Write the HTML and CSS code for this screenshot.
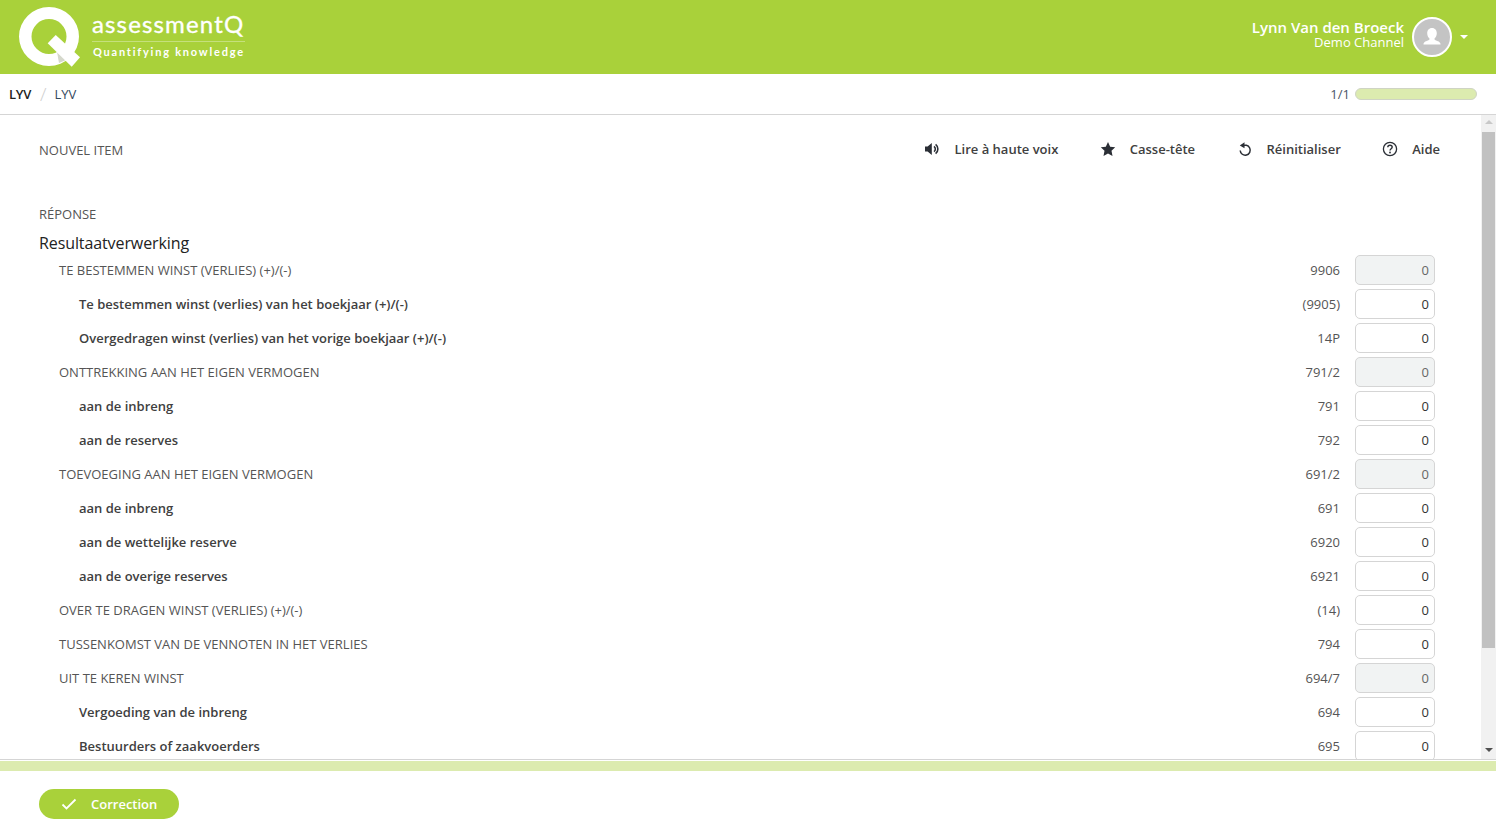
FILE: index.html
```html
<!DOCTYPE html>
<html lang="fr">
<head>
<meta charset="utf-8">
<title>assessmentQ</title>
<link rel="stylesheet" href="styles.css">
</head>
<body>
<div class="page">
  <header class="topbar">
    <div class="logo">
      <svg class="logo-q" viewBox="1 0 66 64" width="66" height="64" aria-hidden="true">
        <path fill-rule="evenodd" fill="#fff" d="M31 0a30 29.500 0 1 0 0 59a30 29.500 0 1 0 0-59zM31 12a17.500 17.500 0 1 1 0 35a17.500 17.500 0 1 1 0-35z"/>
        <path fill="#d5d8cc" d="M39 45L41 56L48 53z"/>
        <path fill="#fff" d="M37.700 28L29.700 36.300L53.700 59.700L62 50.300z"/>
      </svg>
      <div class="logo-text">
        <span class="logo-name">assessmentQ</span>
        <span class="logo-tag">Quantifying knowledge</span>
      </div>
    </div>
    <div class="user">
      <div class="user-text">
        <span class="user-name">Lynn Van den Broeck</span>
        <span class="user-channel">Demo Channel</span>
      </div>
      <div class="avatar">
        <svg viewBox="0 0 36 36" width="36" height="36" aria-hidden="true">
          <path fill="#fff" d="M18 9c-3.100 0-4.800 2.400-4.800 5.200 0 2.200.9 4 2.200 5.100v1.500c-1.300.9-5.400 1.500-5.900 4v.700h17v-.7c-.5-2.500-4.600-3.100-5.900-4v-1.500c1.300-1.100 2.200-2.900 2.200-5.100 0-2.800-1.700-5.200-4.800-5.200z"/>
        </svg>
      </div>
      <span class="caret"></span>
    </div>
  </header>

  <nav class="crumbs">
    <div class="crumb-list">
      <span class="crumb-first">LYV</span>
      <span class="crumb-sep">/</span>
      <span class="crumb-second">LYV</span>
    </div>
    <div class="progress-wrap">
      <span class="progress-label">1/1</span>
      <div class="progress"></div>
    </div>
  </nav>

  <div class="main">
    <div class="content">
      <div class="toolbar">
        <span class="item-title">NOUVEL ITEM</span>
        <div class="actions">
          <span class="action">
            <svg viewBox="1 0 16 16" width="16" height="16" aria-hidden="true"><path fill="#2b2f36" d="M1 5.500h2.600L7.800 2v12L3.600 10.500H1z"/><path fill="none" stroke="#2b2f36" stroke-width="1.600" d="M10 5.300a3.400 3.400 0 0 1 0 5.400M11.600 3.300a6 6 0 0 1 0 9.400"/></svg>
            Lire à haute voix
          </span>
          <span class="action">
            <svg viewBox="0 0 16 16" width="16" height="16" aria-hidden="true"><path fill="#2b2f36" d="M8 1l2.200 4.700 5 .6-3.700 3.500 1 5.100L8 12.400l-4.500 2.500 1-5.100L.8 6.300l5-.6z"/></svg>
            Casse-tête
          </span>
          <span class="action">
            <svg viewBox="0 0 16 16" width="16" height="16" aria-hidden="true"><path fill="none" stroke="#2b2f36" stroke-width="1.500" d="M5.200 5.200A5 5 0 1 1 3.200 9.500"/><path fill="#2b2f36" d="M7.500 1.200v6L2.800 4.600z"/></svg>
            Réinitialiser
          </span>
          <span class="action">
            <svg viewBox="0 0 16 16" width="16" height="16" aria-hidden="true"><circle cx="8" cy="8" r="6.600" fill="none" stroke="#2b2f36" stroke-width="1.300"/><path fill="none" stroke="#2b2f36" stroke-width="1.400" d="M5.800 6.300c0-1.300 1-2.100 2.200-2.100s2.200.8 2.200 1.900c0 1.700-2.200 1.700-2.200 3.500"/><circle cx="8" cy="11.500" r=".9" fill="#2b2f36"/></svg>
            Aide
          </span>
        </div>
      </div>
      <div class="answer-label">RÉPONSE</div>
      <h2 class="section-title">Resultaatverwerking</h2>
      <div class="rows">
        <div class="row head"><span class="label">TE BESTEMMEN WINST (VERLIES) (+)/(-)</span><span class="code">9906</span><span class="field readonly">0</span></div>
        <div class="row sub"><span class="label">Te bestemmen winst (verlies) van het boekjaar (+)/(-)</span><span class="code">(9905)</span><span class="field">0</span></div>
        <div class="row sub"><span class="label">Overgedragen winst (verlies) van het vorige boekjaar (+)/(-)</span><span class="code">14P</span><span class="field">0</span></div>
        <div class="row head"><span class="label">ONTTREKKING AAN HET EIGEN VERMOGEN</span><span class="code">791/2</span><span class="field readonly">0</span></div>
        <div class="row sub"><span class="label">aan de inbreng</span><span class="code">791</span><span class="field">0</span></div>
        <div class="row sub"><span class="label">aan de reserves</span><span class="code">792</span><span class="field">0</span></div>
        <div class="row head"><span class="label">TOEVOEGING AAN HET EIGEN VERMOGEN</span><span class="code">691/2</span><span class="field readonly">0</span></div>
        <div class="row sub"><span class="label">aan de inbreng</span><span class="code">691</span><span class="field">0</span></div>
        <div class="row sub"><span class="label">aan de wettelijke reserve</span><span class="code">6920</span><span class="field">0</span></div>
        <div class="row sub"><span class="label">aan de overige reserves</span><span class="code">6921</span><span class="field">0</span></div>
        <div class="row head"><span class="label">OVER TE DRAGEN WINST (VERLIES) (+)/(-)</span><span class="code">(14)</span><span class="field">0</span></div>
        <div class="row head"><span class="label">TUSSENKOMST VAN DE VENNOTEN IN HET VERLIES</span><span class="code">794</span><span class="field">0</span></div>
        <div class="row head"><span class="label">UIT TE KEREN WINST</span><span class="code">694/7</span><span class="field readonly">0</span></div>
        <div class="row sub"><span class="label">Vergoeding van de inbreng</span><span class="code">694</span><span class="field">0</span></div>
        <div class="row sub"><span class="label">Bestuurders of zaakvoerders</span><span class="code">695</span><span class="field">0</span></div>
      </div>
    </div>
    <div class="scrollbar">
      <span class="arrow arrow-up"></span>
      <div class="thumb"></div>
      <span class="arrow arrow-down"></span>
    </div>
  </div>

  <footer class="footer">
    <div class="strip"></div>
    <div class="footer-body">
      <span class="submit">
        <svg viewBox="0 0 16 12" width="16" height="12" aria-hidden="true"><path fill="none" stroke="#fff" stroke-width="1.800" d="M1.500 6.500L5.500 10.500L14.500 1.500"/></svg>
        Correction
      </span>
    </div>
  </footer>
</div>
</body>
</html>
```

FILE: styles.css
```css
* { box-sizing: border-box; }
html, body { margin: 0; height: 100%; }
body {
  font-family: "Open Sans", "Liberation Sans", sans-serif;
  font-size: 13px;
  color: #333;
  background: #fff;
  overflow: hidden;
}
.page { display: flex; flex-direction: column; height: 834px; }

/* header */
.topbar {
  flex: 0 0 74px;
  background: #a9d13a;
  display: flex;
  justify-content: space-between;
  align-items: center;
  padding: 0 28px 0 19px;
  color: #fff;
}
.logo { display: flex; align-items: flex-start; height: 74px; padding-top: 7px; }
.logo-q { display: block; flex: none; }
.logo-text { display: flex; flex-direction: column; margin-left: 7px; padding-top: 4px; width: 153px; }
.logo-name {
  font-family: Lato, sans-serif;
  font-size: 24px;
  line-height: 26px;
  letter-spacing: 1.15px;
  -webkit-text-stroke: .35px #fff;
  white-space: nowrap;
  padding-bottom: 4px;
  border-bottom: 1px solid #c5e07c;
}
.logo-tag {
  font-family: Lato, sans-serif;
  font-weight: 700;
  font-size: 11px;
  line-height: 14px;
  letter-spacing: 1.78px;
  padding: 3px 0 0 1px;
  white-space: nowrap;
}
.user { display: flex; align-items: center; }
.user-text { display: flex; flex-direction: column; align-items: flex-end; margin-right: 8px; padding-bottom: 6px; }
.user-name { font-size: 15px; font-weight: 600; line-height: 17px; }
.user-channel { font-size: 13px; line-height: 13px; color: #fff; }
.avatar {
  width: 40px;
  height: 40px;
  border: 2px solid #fff;
  border-radius: 50%;
  background: #c4c4c4;
  overflow: hidden;
}
.avatar svg { display: block; }
.caret {
  margin-left: 8px;
  border-left: 4px solid transparent;
  border-right: 4px solid transparent;
  border-top: 4px solid #fff;
}

/* breadcrumb */
.crumbs {
  flex: 0 0 41px;
  display: flex;
  justify-content: space-between;
  align-items: center;
  padding: 0 19px 0 9px;
  border-bottom: 1px solid #d5d5d5;
}
.crumb-list { display: flex; align-items: center; }
.crumb-first { color: #222; font-weight: 600; letter-spacing: -.3px; }
.crumb-second { color: #34495e; }
.crumb-sep { color: #cfcfcf; font-size: 19px; font-weight: 300; margin: 0 8px 0 9px; }
.progress-wrap { display: flex; align-items: center; }
.progress-label { color: #4a5568; margin-right: 5px; }
.progress {
  width: 122px;
  height: 12px;
  background: #dcebaf;
  border: 1px solid #cfd4c4;
  border-radius: 6px;
}

/* main */
.main { flex: 0 0 644px; display: flex; overflow: hidden; }
.content { flex: 1; min-width: 0; padding: 0 46px 0 39px; overflow: hidden; }
.toolbar {
  display: flex;
  justify-content: space-between;
  align-items: center;
  height: 68px;
  margin-right: -5px;
}
.item-title { color: #555; padding-top: 1px; }
.actions { display: flex; gap: 41.4px; }
.action { display: flex; align-items: center; color: #404040; font-weight: 600; }
.action svg { margin-right: 14px; flex: none; }
.answer-label { color: #555; margin-top: 22px; line-height: 18px; }
.section-title { margin: 9px 0 2px; font-size: 16px; font-weight: 400; letter-spacing: -.1px; line-height: 22px; color: #222; height: 19px; }
.rows { display: flex; flex-direction: column; }
.row { flex: 0 0 34px; height: 34px; display: flex; align-items: center; }
.label { flex: 1; min-width: 0; white-space: nowrap; }
.head .label { padding-left: 20px; color: #555; }
.sub .label { padding-left: 40px; color: #404040; font-weight: 600; }
.code { color: #555; margin-right: 15px; }
.field {
  flex: none;
  width: 80px;
  height: 30px;
  line-height: 28px;
  padding-right: 5px;
  text-align: right;
  color: #333;
  border: 1px solid #d5d5d5;
  border-radius: 5px;
  background: #fff;
}
.readonly { background: #f1f3f3; color: #666; }

/* scrollbar */
.scrollbar {
  flex: 0 0 15px;
  background: #f1f1f1;
  display: flex;
  flex-direction: column;
  align-items: center;
}
.arrow { width: 0; border-left: 4px solid transparent; border-right: 4px solid transparent; }
.arrow-up { height: 4px; flex: none; margin: 5px 0 8px; border-bottom: 4px solid #c8c8c8; }
.arrow-down { height: 4px; flex: none; margin-top: auto; margin-bottom: 7px; border-top: 4px solid #505050; }
.thumb { width: 13px; height: 516px; background: #c1c1c1; }

/* footer */
.footer { flex: 1; border-top: 1px solid #d5d5d5; }
.strip { height: 10px; margin-top: 1px; background: #dcebaf; }
.footer-body { padding: 18px 0 0 39px; }
.submit {
  display: inline-flex;
  align-items: center;
  width: 140px;
  height: 30px;
  padding-left: 22px;
  border-radius: 15px;
  background: #a9d13a;
  color: #fff;
  font-weight: 600;
}
.submit svg { margin-right: 14px; flex: none; }
```
